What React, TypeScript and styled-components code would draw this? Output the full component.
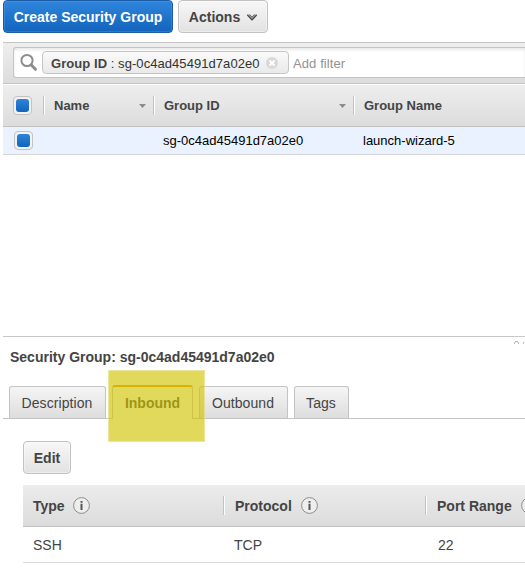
import React from 'react';
import styled, { createGlobalStyle, css } from 'styled-components';

const GlobalStyle = createGlobalStyle`
  *, *::before, *::after { box-sizing: border-box; }
  html, body { margin: 0; padding: 0; background: #fff; overflow: hidden; }
  body { font-family: "Liberation Sans", Helvetica, Arial, sans-serif; font-size: 14px; color: #444; }
`;

const Page = styled.main`
  width: 525px;
  height: 582px;
  padding-left: 3px;
  overflow: hidden;
  white-space: nowrap;
`;

const Toolbar = styled.header`
  display: flex;
  gap: 5px;
  height: 42px;
`;

const Button = styled.button<{ $primary?: boolean; $width: number }>`
  display: flex;
  align-items: center;
  justify-content: center;
  gap: 7px;
  width: ${p => p.$width}px;
  height: 33px;
  padding: 1px 0 0;
  border: 1px solid #c2c2c2;
  border-radius: 4px;
  background: linear-gradient(#f7f7f7, #e2e2e2);
  box-shadow: inset 0 0 0 1px rgba(255, 255, 255, 0.35);
  color: #444;
  font: bold 14px "Liberation Sans", Arial, sans-serif;
  ${p => p.$primary && css`
    border-color: #1a5ca8;
    background: linear-gradient(#2f85dc, #1264bd);
    box-shadow: inset 0 0 0 1px rgba(90, 160, 235, 0.35);
    color: #fff;
  `}
`;

const FilterBar = styled.div`
  height: 42px;
  padding: 4px 0 0 10px;
  border-top: 1px solid #c4c4c4;
  border-bottom: 1px solid #c4c4c4;
  background: linear-gradient(#eee, #dcdcdc);
`;

const SearchField = styled.div`
  display: flex;
  align-items: center;
  height: 31px;
  padding-left: 6px;
  border: 1px solid #c4c4c4;
  border-right: 0;
  border-radius: 3px 0 0 3px;
  background: #fff;
  box-shadow: inset 0 2px 3px rgba(0, 0, 0, 0.09);
  font-size: 13px;
`;

const Chip = styled.div`
  display: flex;
  align-items: center;
  width: 247px;
  height: 23px;
  margin: 0 4px 0 4px;
  padding-left: 8px;
  border: 1px solid #c6c6c6;
  border-radius: 4px;
  background: linear-gradient(#fafafa, #e9e9e9);
  svg { margin-left: 6px; }
`;

const ChipText = styled.span`
  padding-top: 2px;
  color: #333;
  letter-spacing: 0.06px;
  b { color: #444; }
`;

const Placeholder = styled.span`
  padding-top: 2px;
  color: #929292;
  letter-spacing: 0.1px;
`;

const GroupTable = styled.section`
  height: 252px;
`;

const GroupRow = styled.div<{ $head?: boolean }>`
  display: grid;
  grid-template-columns: 40px 110px 200px 1fr;
  align-items: center;
  height: 28px;
  border-bottom: 1px solid #d5d5d5;
  background: #e9f2fe;
  color: #000;
  font-size: 13px;
  ${p => p.$head && css`
    height: 43px;
    border-top: 1px solid #fff;
    border-bottom-color: #c2c2c2;
    background: linear-gradient(#eee, #dcdcdc);
    color: #444;
    font-weight: bold;
  `}
`;

const GroupCell = styled.div<{ $head?: boolean }>`
  display: flex;
  align-items: center;
  justify-content: space-between;
  height: 19px;
  padding: 0 7px 0 10px;
  ${p => p.$head && css`
    border-left: 1px solid #c2c2c2;
    box-shadow: inset 1px 0 #fff;
  `}
`;

const CheckFrame = styled.div<{ $shift?: boolean }>`
  display: grid;
  place-items: center;
  width: 19px;
  height: 19px;
  margin-left: ${p => (p.$shift ? 11 : 10)}px;
  border: 1px solid #c2c2c2;
  border-radius: 4px;
  background: #f2f2f2;
`;

const CheckFill = styled.div`
  width: 13px;
  height: 13px;
  border-radius: 3px;
  background: linear-gradient(#2e83d9, #1264bd);
`;

const SplitBar = styled.div`
  display: flex;
  justify-content: flex-end;
  height: 12px;
  padding-top: 4px;
  border-top: 1px solid #c8c8c8;
  svg { display: block; }
`;

const DetailTitle = styled.h2`
  height: 38px;
  margin: 0;
  padding-left: 7px;
  font-size: 14px;
  line-height: 18px;
`;

const Tabs = styled.nav`
  position: relative;
  display: flex;
  align-items: flex-end;
  gap: 6px;
  height: 33px;
  padding-left: 6px;
  border-bottom: 1px solid #c4c4c4;
`;

const Tab = styled.div<{ $width: number; $active?: boolean }>`
  display: flex;
  justify-content: center;
  width: ${p => p.$width}px;
  height: 32px;
  padding-right: 1px;
  border: 1px solid #c4c4c4;
  border-bottom: 0;
  border-radius: 3px 3px 0 0;
  background: linear-gradient(#f5f5f5, #ddd);
  letter-spacing: 0.08px;
  line-height: 32px;
  ${p => p.$active && css`
    height: 34px;
    margin-bottom: -1px;
    padding-right: 0;
    border-top: 2px solid #e89000;
    background: #fff;
    font-weight: bold;
    letter-spacing: 0;
  `}
`;

const Highlight = styled.div`
  position: absolute;
  left: 105px;
  top: -16px;
  width: 97px;
  height: 72px;
  border: 1px solid rgba(230, 220, 110, 0.7);
  background: rgba(208, 196, 0, 0.64);
  background-clip: padding-box;
`;

const InboundPanel = styled.section`
  display: flex;
  flex-direction: column;
  gap: 11px;
  padding: 22px 0 0 20px;
`;

const RuleTable = styled.div`
  width: 532px;
`;

const RuleRow = styled.div<{ $head?: boolean }>`
  display: grid;
  grid-template-columns: 200px 202px 1fr;
  align-items: center;
  height: 36px;
  border-bottom: 1px solid #dcdcdc;
  ${p => p.$head && css`
    height: 42px;
    border-bottom-color: #c2c2c2;
    background: linear-gradient(#ececec, #dcdcdc);
    font-weight: bold;
  `}
`;

const RuleCell = styled.div<{ $divider?: boolean; $indent: number }>`
  display: flex;
  align-items: center;
  gap: 8px;
  height: 19px;
  padding-left: ${p => p.$indent}px;
  ${p => p.$divider && css`
    gap: 9px;
    border-left: 1px solid #c2c2c2;
    box-shadow: inset 1px 0 #fff;
  `}
`;

const SearchIcon = () => (
  <svg width="18" height="19" viewBox="0 0 18 19" fill="none" stroke="#8c8c8c">
    <circle cx="7" cy="7.5" r="5.6" strokeWidth="2" />
    <path d="M11.3 12l4.2 4.3" strokeWidth="3" strokeLinecap="round" />
  </svg>
);

const RemoveIcon = () => (
  <svg width="12" height="12" viewBox="0 0 12 12">
    <circle cx="6" cy="6" r="6" fill="#d9d9d9" />
    <path d="M3.5 3.5l5 5M8.5 3.5l-5 5" stroke="#fff" strokeWidth="1.8" />
  </svg>
);

const Chevron = () => (
  <svg width="10" height="7" viewBox="0 0 10 7">
    <path d="M0 .5h3l2 2L7 .5h3L5 6.5z" fill="#999" />
    <path d="M.2 1L5 6 9.8 1" fill="none" stroke="#444" strokeWidth="1.1" />
    <path d="M2.5 .6L5 3 7.5 .6" fill="none" stroke="#666" strokeWidth=".7" />
  </svg>
);

const SortArrow = () => (
  <svg width="7" height="4" viewBox="0 0 7 4">
    <path d="M0 0h7L3.5 4z" fill="#8b8b8b" />
  </svg>
);

const InfoIcon = () => (
  <svg width="17" height="17" viewBox="0 0 17 17">
    <circle cx="8.5" cy="8.5" r="7.9" fill="#eee" stroke="#8c8c8c" />
    <path d="M7.5 4h2v1.7h-2zM7.5 6.8h2V13h-2z" fill="#555" />
  </svg>
);

const SplitGrip = () => (
  <svg width="12" height="3" viewBox="0 0 12 3" fill="none" stroke="#bbb">
    <path d="M1.5 3V1.5h1M2 .5h3M4.5 1.5h1V3M10.5 3V1.5h1" />
  </svg>
);

const Checkbox = ({ shift }: { shift?: boolean }) => (
  <CheckFrame $shift={shift} role="checkbox" aria-checked="true"><CheckFill /></CheckFrame>
);

const groupId = 'sg-0c4ad45491d7a02e0';

export default function App() {
  return (
    <>
      <GlobalStyle />
      <Page>
        <Toolbar>
          <Button $primary $width={170}>Create Security Group</Button>
          <Button $width={90}>Actions <Chevron /></Button>
        </Toolbar>
        <FilterBar>
          <SearchField>
            <SearchIcon />
            <Chip><ChipText><b>Group ID</b> : {groupId}</ChipText><RemoveIcon /></Chip>
            <Placeholder>Add filter</Placeholder>
          </SearchField>
        </FilterBar>
        <GroupTable>
          <GroupRow $head>
            <Checkbox />
            <GroupCell $head>Name<SortArrow /></GroupCell>
            <GroupCell $head>Group ID<SortArrow /></GroupCell>
            <GroupCell $head>Group Name</GroupCell>
          </GroupRow>
          <GroupRow>
            <Checkbox shift />
            <GroupCell />
            <GroupCell>{groupId}</GroupCell>
            <GroupCell>launch-wizard-5</GroupCell>
          </GroupRow>
        </GroupTable>
        <SplitBar><SplitGrip /></SplitBar>
        <DetailTitle>Security Group: {groupId}</DetailTitle>
        <Tabs>
          <Tab $width={97}>Description</Tab>
          <Tab $width={81} $active>Inbound</Tab>
          <Tab $width={89}>Outbound</Tab>
          <Tab $width={55}>Tags</Tab>
          <Highlight />
        </Tabs>
        <InboundPanel>
          <Button $width={48}>Edit</Button>
          <RuleTable>
            <RuleRow $head>
              <RuleCell $indent={10}>Type <InfoIcon /></RuleCell>
              <RuleCell $indent={11} $divider>Protocol <InfoIcon /></RuleCell>
              <RuleCell $indent={11} $divider>Port Range <InfoIcon /></RuleCell>
            </RuleRow>
            <RuleRow>
              <RuleCell $indent={10}>SSH</RuleCell>
              <RuleCell $indent={11}>TCP</RuleCell>
              <RuleCell $indent={13}>22</RuleCell>
            </RuleRow>
          </RuleTable>
        </InboundPanel>
      </Page>
    </>
  );
}
